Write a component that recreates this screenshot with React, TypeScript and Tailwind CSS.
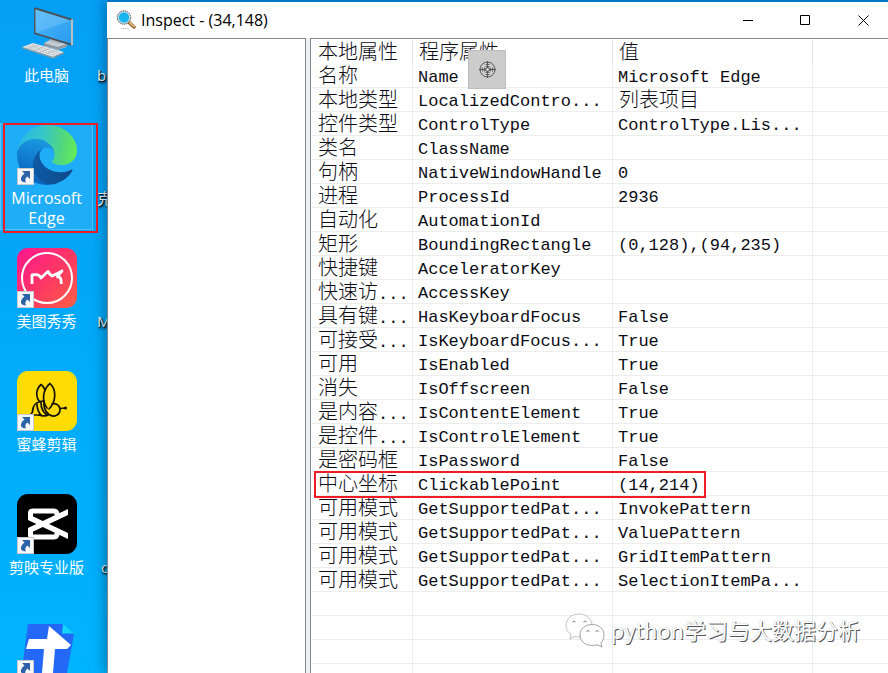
import React from 'react';
import clsx from 'clsx';

interface PropertyRow {
  label: string;
  name: string;
  value?: string;
  marked?: boolean;
}

interface Shortcut {
  label: string;
  icon: React.FC;
  neighbour?: string;
  selected?: boolean;
  linked?: boolean;
}

const rows: PropertyRow[] = [
  { label: '名称', name: 'Name', value: 'Microsoft Edge' },
  { label: '本地类型', name: 'LocalizedContro...', value: '列表项目' },
  { label: '控件类型', name: 'ControlType', value: 'ControlType.Lis...' },
  { label: '类名', name: 'ClassName' },
  { label: '句柄', name: 'NativeWindowHandle', value: '0' },
  { label: '进程', name: 'ProcessId', value: '2936' },
  { label: '自动化', name: 'AutomationId' },
  { label: '矩形', name: 'BoundingRectangle', value: '(0,128),(94,235)' },
  { label: '快捷键', name: 'AcceleratorKey' },
  { label: '快速访...', name: 'AccessKey' },
  { label: '具有键...', name: 'HasKeyboardFocus', value: 'False' },
  { label: '可接受...', name: 'IsKeyboardFocus...', value: 'True' },
  { label: '可用', name: 'IsEnabled', value: 'True' },
  { label: '消失', name: 'IsOffscreen', value: 'False' },
  { label: '是内容...', name: 'IsContentElement', value: 'True' },
  { label: '是控件...', name: 'IsControlElement', value: 'True' },
  { label: '是密码框', name: 'IsPassword', value: 'False' },
  { label: '中心坐标', name: 'ClickablePoint', value: '(14,214)', marked: true },
  { label: '可用模式', name: 'GetSupportedPat...', value: 'InvokePattern' },
  { label: '可用模式', name: 'GetSupportedPat...', value: 'ValuePattern' },
  { label: '可用模式', name: 'GetSupportedPat...', value: 'GridItemPattern' },
  { label: '可用模式', name: 'GetSupportedPat...', value: 'SelectionItemPa...' },
];

const emptyRows = [0, 1, 2, 3];

const ComputerIcon = () => (
  <svg viewBox="0 0 60 60" className="size-15">
    <defs>
      <linearGradient id="screen" x1="0" y1="0" x2="1" y2="1">
        <stop offset="0" stopColor="#4db8f8" />
        <stop offset="1" stopColor="#2a9bf0" />
      </linearGradient>
    </defs>
    <path d="M27 41l6-3 17 4-1 3-8 3-14-4z" fill="#c3ccd3" />
    <path d="M27 41l14 4 9-3v2l-9 4-14-4z" fill="#8d989f" />
    <path d="M33 34l10 3v5l-10-3z" fill="#aab4bb" />
    <path d="M17 6l2-.6L56 17v26l-2 .5L17 32z" fill="#4a5358" />
    <path d="M18.500 7.500L54 18.600v22.800L18.500 30.800z" fill="url(#screen)" />
    <path d="M18.500 7.500L54 18.600 18.500 30.800z" fill="#8ad2ff" opacity=".35" />
    <path d="M54 17.500l2-.5v26l-2 .5z" fill="#b9c0c4" />
    <path d="M5 45l11-4 31 9-11 5z" fill="#e4e7e9" />
    <path d="M5 45v1.200L36 56.500l11-5V50l-11 5z" fill="#8e979c" />
    <path
      d="M9 44.600l29 9M12 43.500l29 9M15 42.500l29 9M11 46.800l11-4M17 48.600l11-4M23 50.300l11-4M29 52l11-4"
      stroke="#a3abb0"
      strokeWidth=".8"
      strokeDasharray="1.500 1"
      fill="none"
    />
  </svg>
);

const EdgeIcon = () => (
  <svg viewBox="0 0 256 256" className="size-15">
    <defs>
      <linearGradient id="edgeDark" x1=".1" y1=".5" x2="1" y2=".6">
        <stop offset="0" stopColor="#0c59a4" />
        <stop offset="1" stopColor="#114a8b" />
      </linearGradient>
      <linearGradient id="edgeBlue" x1=".6" y1="0" x2=".35" y2="1">
        <stop offset="0" stopColor="#1b9de2" />
        <stop offset=".4" stopColor="#1382d3" />
        <stop offset="1" stopColor="#0a60b8" />
      </linearGradient>
      <linearGradient id="edgeGreen" x1="0" y1=".4" x2="1" y2=".5">
        <stop offset="0" stopColor="#27b5e8" />
        <stop offset=".4" stopColor="#35c6cb" />
        <stop offset=".75" stopColor="#51d67f" />
        <stop offset="1" stopColor="#66eb57" />
      </linearGradient>
    </defs>
    <g transform="translate(-4.630 -4.920)">
      <path
        d="M235.680 195.460a93.730 93.730 0 0 1-10.540 4.710 101.870 101.870 0 0 1-35.900 6.460c-47.320 0-88.540-32.550-88.540-74.320A31.480 31.480 0 0 1 117.130 105c-42.800 1.800-53.800 46.400-53.800 72.530 0 73.880 68.090 81.370 82.760 81.370 7.910 0 19.840-2.300 27-4.560l1.310-.44a128.340 128.340 0 0 0 66.600-52.800 4 4 0 0 0-5.320-5.640z"
        fill="url(#edgeDark)"
      />
      <path
        d="M110.340 246.340A79.200 79.200 0 0 1 87.600 225a80.720 80.720 0 0 1 29.530-120c3.120-1.470 8.450-4.130 15.540-4a32.350 32.350 0 0 1 25.690 13 31.880 31.880 0 0 1 6.360 18.660c0-.21 24.460-79.600-80-79.600-43.900 0-80 41.660-80 78.210a130.150 130.150 0 0 0 12.110 56 128 128 0 0 0 156.380 67.110 75.550 75.550 0 0 1-62.780-8z"
        fill="url(#edgeBlue)"
      />
      <path
        d="M156.940 153.780c-.81 1.050-3.300 2.500-3.300 5.660 0 2.610 1.700 5.120 4.720 7.230 14.380 10 41.490 8.680 41.560 8.680A59.560 59.560 0 0 0 230.190 167a61.380 61.380 0 0 0 30.430-52.880c.26-22.410-8-37.310-11.340-43.910-21.190-41.450-66.930-65.290-116.670-65.290a128 128 0 0 0-128 126.200c.48-36.540 36.800-66.050 80-66.050 3.500 0 23.460.34 42 10.070 16.340 8.580 24.900 18.940 30.850 29.210 6.180 10.670 7.280 24.150 7.280 29.520s-2.740 13.330-7.800 19.910z"
        fill="url(#edgeGreen)"
      />
    </g>
  </svg>
);

const MeituIcon = () => (
  <svg viewBox="0 0 60 60" className="size-15">
    <defs>
      <linearGradient id="meitu" x1="0" y1="0" x2="1" y2="1">
        <stop offset="0" stopColor="#ff1590" />
        <stop offset=".55" stopColor="#fd3a62" />
        <stop offset="1" stopColor="#fd6045" />
      </linearGradient>
    </defs>
    <rect width="60" height="60" rx="11" fill="url(#meitu)" />
    <circle cx="30" cy="30" r="25" fill="none" stroke="#fff" strokeWidth="2" />
    <path
      d="M15 36v-9l2-.3q5.500-.7 7 3.300 4-4 7-6.500 1.500 3 4 4.500 5-2 10-5-3 3-4.500 6 4-1 3.800 7"
      fill="none"
      stroke="#fff"
      strokeWidth="2.800"
      strokeLinejoin="round"
    />
  </svg>
);

const BeeIcon = () => (
  <svg viewBox="0 0 60 60" className="size-15">
    <rect width="60" height="60" rx="11" fill="#ffdc04" />
    <g fill="none" stroke="#16130a" strokeWidth="1.700" strokeLinecap="round" strokeLinejoin="round">
      <path d="M30 37C25 31 25 19 33 12.500C40 19 39 31 32 38" />
      <path d="M28 19Q27 15.500 24 13.500C18 19 19 27 23 31" />
      <path d="M27 30C19 30 15.500 35 15.500 41L13.500 44H23" />
      <path d="M20 33Q20 40 24.500 44.500M24 31.500Q24 40 30 44" />
      <path d="M27 30Q26 39 32 43.500Q28 46 22 44M32 43.500C37 47 43.500 44 43 38C42 33 38 32 35 33" />
      <path d="M43 37.500L48 37" />
    </g>
    <circle cx="48.500" cy="37" r="1.600" fill="#16130a" />
  </svg>
);

const JianyingIcon = () => (
  <svg viewBox="0 0 60 60" className="size-15">
    <rect width="60" height="60" rx="11" fill="#000" />
    <g fill="#fff">
      <path d="M11 20L51 39v6L11 26z" />
      <path d="M11 34L51 15v6L11 40z" />
    </g>
    <path
      d="M13.500 24V19q0-2 2-2H37q3 0 3 4M13.500 36v5q0 2 2 2H37q3 0 3-4"
      fill="none"
      stroke="#fff"
      strokeWidth="5"
    />
  </svg>
);

const DocsIcon = () => (
  <svg viewBox="0 -7 60 60" className="size-15">
    <path d="M11 0h35l11 10-9 50H3z" fill="#2468f7" />
    <path d="M46 0l11 9.500H45z" fill="#12d6f8" />
    <path d="M32 2l22 19-4 4H38l-3 36H24l3-36H9l3-10h18z" fill="#fff" />
  </svg>
);

const ArrowOverlay = () => (
  <svg viewBox="0 0 17 17" className="absolute bottom-0 left-0 size-[17px]">
    <rect x=".5" y=".5" width="16" height="16" fill="#f7f8fa" stroke="#c6cbd2" />
    <path d="M5 3l8 0v8l-2.500-2.500Q7 11 9 14.500 3 14 4 10q.8-3 3.500-4.500z" fill="#2c62a8" />
  </svg>
);

const shortcuts: Shortcut[] = [
  { label: '此电脑', icon: ComputerIcon, neighbour: 'b' },
  { label: 'Microsoft Edge', icon: EdgeIcon, neighbour: '克', selected: true, linked: true },
  { label: '美图秀秀', icon: MeituIcon, neighbour: 'M', linked: true },
  { label: '蜜蜂剪辑', icon: BeeIcon, linked: true },
  { label: '剪映专业版', icon: JianyingIcon, neighbour: ' c', linked: true },
  { label: '', icon: DocsIcon, linked: true },
];

const DesktopShortcut: React.FC<{ shortcut: Shortcut }> = ({ shortcut }) => {
  const Icon = shortcut.icon;
  return (
    <div className="relative flex h-[123px] shrink-0">
      <button
        aria-label={shortcut.label || 'Docs'}
        className={clsx(
          'flex h-[107px] w-[94px] flex-col items-center border pt-px',
          shortcut.selected ? 'border-[#55c3fb] bg-[#20adf8] text-[16px]' : 'border-transparent'
        )}
      >
        <span className="relative">
          <Icon />
          {shortcut.linked && <ArrowOverlay />}
        </span>
        <span className="mt-[3px] w-20 text-center leading-5">{shortcut.label}</span>
      </button>
      {/* label of the next desktop column, cut off by the window */}
      <span className="w-[14px] overflow-hidden pt-[65px] pl-1 leading-5 whitespace-pre">{shortcut.neighbour}</span>
      {shortcut.selected && <div className="absolute top-0 left-[3px] h-[110px] w-[95px] border-2 border-[#ee1c25]" />}
    </div>
  );
};

const LabelText: React.FC<{ text: string }> = ({ text }) => {
  const cut = text.endsWith('...');
  return (
    <>
      {cut ? text.slice(0, -3) : text}
      {cut && <span className="text-[17px] leading-none">...</span>}
    </>
  );
};

const isChinese = (text: string) => /[\u4e00-\u9fff]/.test(text);

const cell = 'h-6 border-r border-b border-[#ededed] p-0 pt-[5px] pl-[5px] leading-[18px] whitespace-nowrap';
const labelCell = 'h-6 border-r border-b border-[#ededed] p-0 pt-[5px] pl-1.5 text-[20px] leading-[18px] font-light whitespace-nowrap';
const headCell = 'h-6 border-r border-[#e3e3e3] p-0 pt-1 pl-1.5 text-left text-[20px] leading-5 font-light';
const lastCell = 'h-6 border-b border-[#ededed] p-0';

const PropertyTable = () => (
  <table className="w-full table-fixed border-separate border-spacing-0 font-['Liberation_Mono','Noto_Sans_CJK_SC',monospace] text-[17px] text-[#0c0c14]">
    <colgroup>
      <col className="w-[101px]" />
      <col className="w-[200px]" />
      <col className="w-[200px]" />
      <col />
    </colgroup>
    <thead>
      <tr>
        <th className={headCell}>本地属性</th>
        <th className={headCell}>程序属性</th>
        <th className={headCell}>值</th>
        <td className="border-l border-transparent" />
      </tr>
    </thead>
    <tbody>
      {rows.map((row, idx) => (
        <tr key={idx} className="relative">
          <td className={labelCell}>
            <LabelText text={row.label} />
            {row.marked && (
              <div className="absolute -top-px left-[2px] z-10 h-[27px] w-[392px] border-2 border-[#ee1c25]" />
            )}
          </td>
          <td className={cell}>{row.name}</td>
          <td className={row.value && isChinese(row.value) ? labelCell : cell}>{row.value}</td>
          <td className={lastCell} />
        </tr>
      ))}
      {emptyRows.map((idx) => (
        <tr key={idx}>
          <td className={cell} />
          <td className={cell} />
          <td className={cell} />
          <td className={lastCell} />
        </tr>
      ))}
    </tbody>
  </table>
);

const MagnifierIcon = () => (
  <svg viewBox="0 0 20 20" className="size-5">
    <path d="M5 18.500h8" stroke="#d6d6d6" />
    <path d="M12 11.500l6 5.500" stroke="#8a5a2c" strokeWidth="3.400" strokeLinecap="round" />
    <path d="M12.500 11.500l5.500 5" stroke="#e4b277" strokeWidth="1.800" strokeLinecap="round" />
    <circle cx="8" cy="7.500" r="5.800" fill="#19b5f1" stroke="#cfdbe2" strokeWidth="1.200" />
    <circle cx="8" cy="7.500" r="6.700" fill="none" stroke="#36444c" strokeWidth="1" strokeDasharray="1.500 .8" />
  </svg>
);

const TitleBar = () => (
  <header className="flex h-9 shrink-0 items-center gap-2 pl-[9px]">
    <div className="flex flex-1 items-center gap-[5px]">
      <MagnifierIcon />
      <h1 className="text-[16px] leading-6 text-black">Inspect - (34,148)</h1>
    </div>
    <button aria-label="Minimize" className="flex h-full w-[50px] items-center justify-center">
      <svg viewBox="0 0 11 11" className="size-[11px]" stroke="#000">
        <path d="M1 5.500h10" />
      </svg>
    </button>
    <button aria-label="Maximize" className="flex h-full w-[50px] items-center justify-center">
      <svg viewBox="0 0 11 11" className="size-[11px]" stroke="#000" fill="none">
        <path d="M.5.5h9v9h-9z" />
      </svg>
    </button>
    <button aria-label="Close" className="flex h-full w-[50px] items-center justify-center">
      <svg viewBox="0 0 11 11" className="size-[11px]" stroke="#000">
        <path d="M.5.5l10 10M10.500.5l-10 10" />
      </svg>
    </button>
  </header>
);

const TargetButton = () => (
  <button
    aria-label="Target"
    className="absolute top-[11px] left-[157px] flex h-[39px] w-[38px] items-center justify-center border border-[#bdbdbd] bg-[#cccccc]"
  >
    <svg viewBox="0 0 19 19" className="size-[19px]" fill="none" stroke="#555">
      <circle cx="9.500" cy="9.500" r="7.500" />
      <circle cx="9.500" cy="9.500" r="2" />
      <path d="M9.500 1v7M9.500 11v7M1 9.500h7M11 9.500h7" />
      <path d="M7.500 4.500h4M7.500 6.500h4M7.500 12.500h4M7.500 14.500h4M4.500 7.500v4M6.500 7.500v4M12.500 7.500v4M14.500 7.500v4" strokeWidth=".8" />
    </svg>
  </button>
);

const Watermark = () => (
  <div className="absolute right-7 bottom-6 flex items-center gap-1.5">
    <svg viewBox="0 -2 40 36" className="size-10" fill="#fff" stroke="#8c8c8c" strokeWidth=".8">
      <path d="M14 1C6.500 1 1 6 1 12.500c0 4 2 7 5 9L5 26l5-2.500q3 .8 6 .5L27 11C26 5 20.500 1 14 1z" stroke="#b4b4b4" />
      <path d="M27 11.500c-7 0-12 4.500-12 10.500s5 10.500 12 10.500q3 0 5-.8l5 2.300-1.200-4c2-2 3.200-5 3.200-8 0-6-5-10.500-12-10.500z" />
      <path d="M7.500 9q1.500-2 3 0M18.500 9q1.500-2 3 0M21.500 18.500q1.500-2 3 0M30.500 18.500q1.500-2 3 0" fill="none" stroke="#555" />
    </svg>
    <span className="font-['Noto_Sans_CJK_SC',sans-serif] text-[22px] leading-8 text-white [text-shadow:1px_1px_0_#555,0_0_1px_#aaa]">
      python学习与大数据分析
    </span>
  </div>
);

const App: React.FC = () => {
  return (
    <div className="flex h-screen overflow-hidden bg-linear-to-b from-[#059ff6] to-[#00b3ff] font-['Open_Sans','Noto_Sans_CJK_SC',sans-serif]">
      <nav className="flex w-[107px] shrink-0 flex-col text-[15px] text-white [text-shadow:1px_1px_1px_#000,1px_2px_3px_#000]">
        {shortcuts.map((shortcut, idx) => (
          <DesktopShortcut key={idx} shortcut={shortcut} />
        ))}
      </nav>

      {/* Inspect window */}
      <main className="relative flex min-w-0 flex-1 flex-col border-t-2 border-[#0078c8] bg-white shadow-[-2px_0_12px_#00406088]">
        <TitleBar />
        <div className="flex min-h-0 flex-1 bg-[#f0f0f0]">
          <section className="w-[199px] shrink-0 border border-b-0 border-[#828790] bg-white" />
          <section className="relative ml-1 min-w-0 flex-1 overflow-hidden border-t border-l border-[#828790] bg-white pt-px pl-px">
            <PropertyTable />
            <TargetButton />
          </section>
        </div>
        <Watermark />
      </main>
    </div>
  );
};

export default App;
